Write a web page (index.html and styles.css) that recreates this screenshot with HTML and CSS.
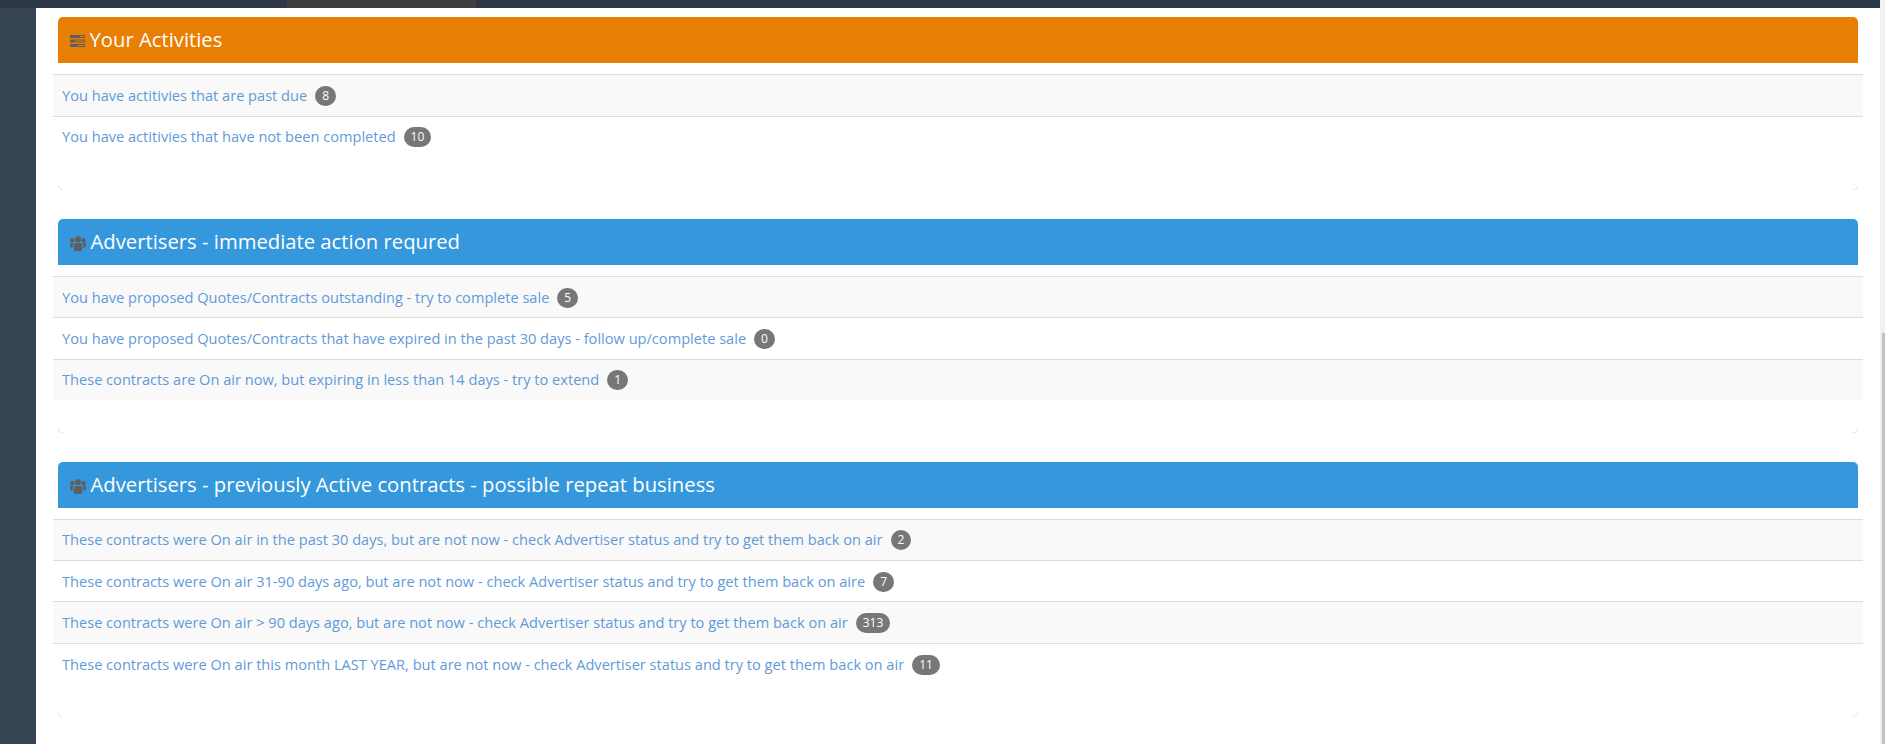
FILE: index.html
```html
<!DOCTYPE html>
<html lang="en">
<head>
<meta charset="utf-8">
<title>Dashboard</title>
<link rel="stylesheet" href="styles.css">
</head>
<body>
<header class="topbar"><span class="topbar-tab"></span></header>
<div class="page">
  <aside class="sidebar"></aside>
  <main class="content">
    <section class="panel panel-orange panel-2">
      <h2 class="panel-heading">
        <svg class="icon icon-tasks" viewBox="0 0 15 12" aria-hidden="true"><path class="g" d="M0 0h15v3H0zM0 4.500h15v3H0zM0 9h15v3H0z"/><path class="o" d="M10 1h4v1h-4zM5 5.500h9v1H5zM8 10h6v1H8z"/></svg>
        <span>Your Activities</span>
      </h2>
      <div class="panel-body">
        <ul class="rows">
          <li class="row"><a href="#">You have actitivies that are past due</a><span class="badge">8</span></li>
          <li class="row"><a href="#">You have actitivies that have not been completed</a><span class="badge">10</span></li>
        </ul>
      </div>
    </section>
    <section class="panel panel-blue panel-3">
      <h2 class="panel-heading">
        <svg class="icon icon-users" viewBox="0 0 16 15" aria-hidden="true"><circle cx="8" cy="3.200" r="3"/><circle cx="2.400" cy="4.200" r="2.200"/><circle cx="13.600" cy="4.200" r="2.200"/><path d="M3.900 9c0-1.400 1-2 2-2h4.200c1 0 2 .6 2 2v4.300c0 1-.7 1.700-1.700 1.700H5.600c-1 0-1.700-.7-1.700-1.700z"/><path d="M0 8.200c0-1 .7-1.500 1.500-1.500h1.900C3 7.300 2.900 8 2.900 9v2.500H1.200C.5 11.500 0 11 0 10.300zM16 8.200c0-1-.7-1.500-1.500-1.500h-1.900c.4.600.5 1.300.5 2.300v2.500h1.700c.7 0 1.200-.5 1.200-1.200z"/></svg>
        <span>Advertisers - immediate action requred</span>
      </h2>
      <div class="panel-body">
        <ul class="rows">
          <li class="row"><a href="#">You have proposed Quotes/Contracts outstanding - try to complete sale</a><span class="badge">5</span></li>
          <li class="row"><a href="#">You have proposed Quotes/Contracts that have expired in the past 30 days - follow up/complete sale</a><span class="badge">0</span></li>
          <li class="row"><a href="#">These contracts are On air now, but expiring in less than 14 days - try to extend</a><span class="badge">1</span></li>
        </ul>
      </div>
    </section>
    <section class="panel panel-blue panel-4">
      <h2 class="panel-heading">
        <svg class="icon icon-users" viewBox="0 0 16 15" aria-hidden="true"><circle cx="8" cy="3.200" r="3"/><circle cx="2.400" cy="4.200" r="2.200"/><circle cx="13.600" cy="4.200" r="2.200"/><path d="M3.900 9c0-1.400 1-2 2-2h4.200c1 0 2 .6 2 2v4.300c0 1-.7 1.700-1.700 1.700H5.600c-1 0-1.700-.7-1.700-1.700z"/><path d="M0 8.200c0-1 .7-1.500 1.500-1.500h1.900C3 7.300 2.900 8 2.900 9v2.500H1.200C.5 11.500 0 11 0 10.300zM16 8.200c0-1-.7-1.500-1.500-1.500h-1.900c.4.600.5 1.300.5 2.300v2.500h1.700c.7 0 1.200-.5 1.200-1.200z"/></svg>
        <span>Advertisers - previously Active contracts - possible repeat business</span>
      </h2>
      <div class="panel-body">
        <ul class="rows">
          <li class="row"><a href="#">These contracts were On air in the past 30 days, but are not now - check Advertiser status and try to get them back on air</a><span class="badge">2</span></li>
          <li class="row"><a href="#">These contracts were On air 31-90 days ago, but are not now - check Advertiser status and try to get them back on aire</a><span class="badge">7</span></li>
          <li class="row"><a href="#">These contracts were On air &gt; 90 days ago, but are not now - check Advertiser status and try to get them back on air</a><span class="badge">313</span></li>
          <li class="row"><a href="#">These contracts were On air this month LAST YEAR, but are not now - check Advertiser status and try to get them back on air</a><span class="badge">11</span></li>
        </ul>
      </div>
    </section>
  </main>
  <div class="scrollbar"><div class="scrollbar-thumb"></div></div>
</div>
</body>
</html>
```

FILE: styles.css
```css
* { box-sizing: border-box; }
html, body { margin: 0; height: 100%; overflow: hidden; }
body {
  display: flex;
  flex-direction: column;
  font-family: "Open Sans", sans-serif;
  font-size: 14.6px;
  line-height: 20px;
  background: #fff;
}
.topbar {
  height: 8px;
  flex: none;
  background: #2c3846;
  margin-right: 5px;
  padding-left: 287px;
}
.topbar-tab {
  display: block;
  width: 189px;
  height: 8px;
  background: #403f3f;
}
.page { flex: 1; display: flex; min-height: 0; }
.sidebar { width: 36px; flex: none; background: #374453; }
.content {
  flex: 1;
  min-width: 0;
  padding: 9px 22px 0;
  background: #fff;
}
.panel {
  margin-bottom: 29px;
  border-radius: 5px;
}
.panel-2 { height: 173px; }
.panel-3 { height: 214px; }
.panel-4 { height: 255px; }
.panel-orange { background: #e87e04; }
.panel-blue { background: #3598dc; }
.panel-heading {
  margin: 0;
  height: 46px;
  padding: 0 0 2px 11.500px;
  display: flex;
  align-items: center;
  gap: 5px;
  font-size: 20.250px;
  font-weight: 400;
  color: #fff;
}
.icon { flex: none; fill: #5f5f5f; margin-top: 4px; }
.icon-tasks { width: 15px; height: 12px; }
.icon-tasks .o { fill: #e87e04; }
.icon-users { width: 16px; height: 15px; }
.panel-body {
  height: calc(100% - 46px);
  padding-top: 11px;
  background: #fff;
  border-radius: 0 0 5px 5px;
}
.panel-2 .panel-body { padding-top: 11.200px; }
.panel-4 .panel-body { padding-top: 10.650px; }
.rows {
  list-style: none;
  margin: 0 -5px;
  padding: 0;
}
.row {
  display: flex;
  align-items: center;
  gap: 8px;
  height: 41.400px;
  padding: 0 8px 1px 9px;
  border-top: 1px solid #ddd;
}
.row:nth-child(odd) { background: #f9f9f9; }
.row a { color: #5f9bd8; text-decoration: none; }
.badge {
  min-width: 20px;
  margin-top: 2px;
  padding: 3px 7px;
  border-radius: 10px;
  background: #777;
  color: #fff;
  font-size: 12px;
  line-height: 14px;
  text-align: center;
}
.scrollbar { width: 5px; flex: none; margin-top: -8px; padding: 333px 0 0 2px; background: #f1f1f1; }
.scrollbar-thumb { height: 100%; background: #c1c1c1; }
```
